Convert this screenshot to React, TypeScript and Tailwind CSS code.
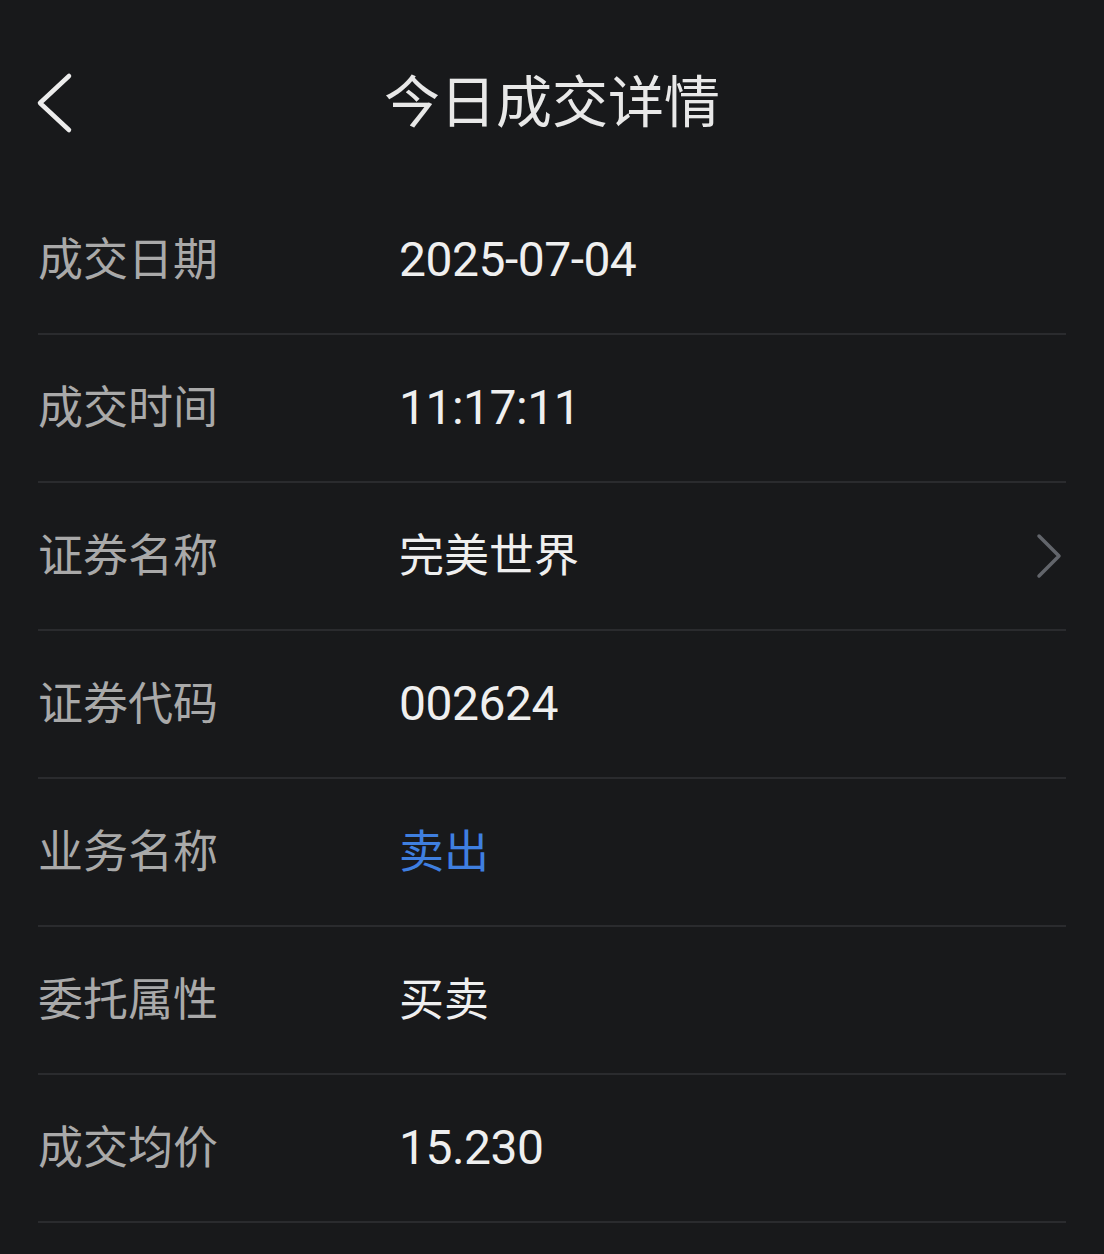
import React from "react";

type Row = { label: string; value: string; blue?: boolean; link?: boolean };

const rows: Row[] = [
  { label: "成交日期", value: "2025-07-04" },
  { label: "成交时间", value: "11:17:11" },
  { label: "证券名称", value: "完美世界", link: true },
  { label: "证券代码", value: "002624" },
  { label: "业务名称", value: "卖出", blue: true },
  { label: "委托属性", value: "买卖" },
  { label: "成交均价", value: "15.230" },
];

const font = { fontFamily: 'Roboto, "Noto Sans CJK SC", sans-serif' };

export default function App() {
  return (
    <div className="min-h-[1254px] w-full bg-[#18191b]" style={font}>
      {/* Header */}
      <div className="relative flex h-[187px] items-center justify-center pt-[19px]">
        <button className="absolute left-[34px] top-[72px] flex h-[62px] w-[42px] items-center justify-center">
          <svg width="42" height="62" viewBox="0 0 42 62" fill="none">
            <path d="M35 4 L6 31 L35 58" stroke="#ececec" strokeWidth="4.5" strokeLinecap="round" strokeLinejoin="round" />
          </svg>
        </button>
        <h1 className="text-[56px] font-normal leading-none text-[#e8e8e8]">今日成交详情</h1>
      </div>

      {/* Rows */}
      <div className="px-[38px]">
        {rows.map((r) => (
          <div key={r.label} className="flex h-[148px] items-center border-b-2 border-[#2a2b2e]">
            <span className="w-[361px] shrink-0 text-[45px] leading-none text-[#a9a9a9]">{r.label}</span>
            <span
              className={`flex-1 leading-none ${/\d/.test(r.value) ? "text-[48px] tracking-[-0.5px]" : "text-[45px]"} ${
                r.blue ? "text-[#3f7fe0]" : "text-[#efefef]"
              }`}
            >
              {r.value}
            </span>
            {r.link && (
              <svg width="30" height="46" viewBox="0 0 30 46" fill="none" className="mr-[2px]">
                <path d="M5 3 L25 23 L5 43" stroke="#62656b" strokeWidth="3.5" strokeLinecap="round" strokeLinejoin="round" />
              </svg>
            )}
          </div>
        ))}
      </div>
    </div>
  );
}
